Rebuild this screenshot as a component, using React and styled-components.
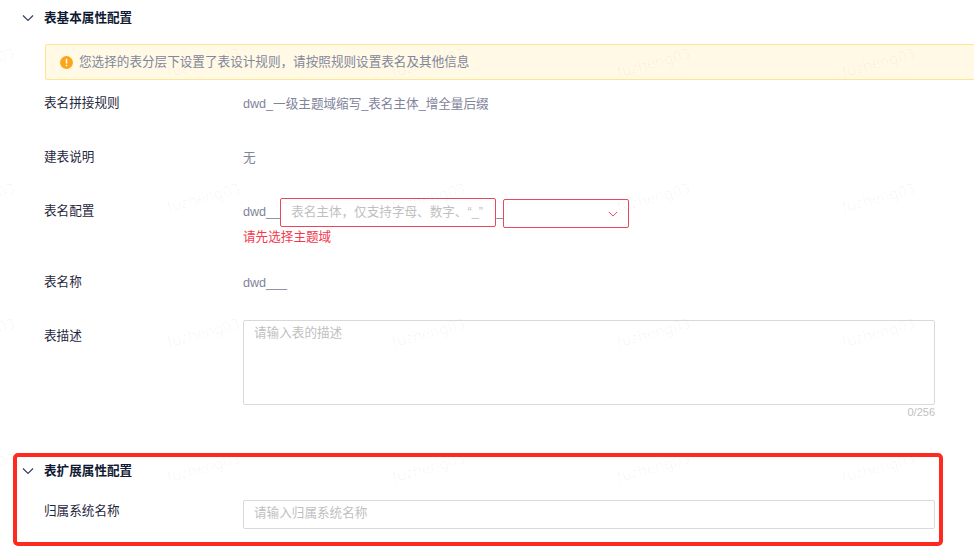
import styled, { createGlobalStyle } from "styled-components";

const GlobalStyle = createGlobalStyle`
    html, body {
        margin: 0;
        padding: 0;
        background: #fff;
    }
    body {
        font-family: "Liberation Sans", "Noto Sans CJK SC", sans-serif;
        font-size: 12.6px;
        color: #1f2740;
    }
`;

const Chevron = ({color = "#3a4060", size = 12}) => (
    <svg width={size} height={size} viewBox="0 0 12 12" fill="none">
        <path d="M1 3.5 L6 8.5 L11 3.5" stroke={color} strokeWidth="1.2" />
    </svg>
);

const WarningIcon = () => (
    <svg width="13" height="13" viewBox="0 0 13 13">
        <circle cx="6.5" cy="6.5" r="6.5" fill="#faa61a" />
        <rect x="5.8" y="2.8" width="1.4" height="4.8" fill="#fff" />
        <rect x="5.8" y="8.7" width="1.4" height="1.5" fill="#fff" />
    </svg>
);

const Row = ({label, gap, children}) => (
    <FormRow $gap={gap}>
        <Label>{label}</Label>
        <div>{children}</div>
    </FormRow>
);

const App = () => {
    const marks = Array.from({length: 20}, (_, index) => index);
    return (
        <Page>
            <GlobalStyle />
            <SectionHeader>
                <Chevron />
                <SectionTitle>表基本属性配置</SectionTitle>
            </SectionHeader>
            <Alert>
                <WarningIcon />
                您选择的表分层下设置了表设计规则，请按照规则设置表名及其他信息
            </Alert>
            <Row label="表名拼接规则">
                <Value>dwd_一级主题域缩写_表名主体_增全量后缀</Value>
            </Row>
            <Row label="建表说明">
                <Value>无</Value>
            </Row>
            <Row label="表名配置" gap={19}>
                <NameControls>
                    <Value>dwd__</Value>
                    <NameInput>表名主体，仅支持字母、数字、“_”</NameInput>
                    <Joiner>_</Joiner>
                    <NameSelect>
                        <Chevron color="#e8485c" size={10} />
                    </NameSelect>
                </NameControls>
                <ErrorText>请先选择主题域</ErrorText>
            </Row>
            <Row label="表名称">
                <Value>dwd___</Value>
            </Row>
            <Row label="表描述" gap={34}>
                <TextArea>请输入表的描述</TextArea>
                <Counter>0/256</Counter>
            </Row>
            <HighlightFrame>
                <SectionHeader $inFrame>
                    <Chevron />
                    <SectionTitle>表扩展属性配置</SectionTitle>
                </SectionHeader>
                <FrameRow>
                    <Label>归属系统名称</Label>
                    <TextInput>请输入归属系统名称</TextInput>
                </FrameRow>
            </HighlightFrame>
            <WatermarkLayer>
                {marks.map((mark) => (
                    <Watermark key={mark}>fuzheng03</Watermark>
                ))}
            </WatermarkLayer>
        </Page>
    );
};

const Page = styled.div`
    position: relative;
    width: 974px;
    height: 557px;
    padding-top: 8px;
    box-sizing: border-box;
    overflow: hidden;
`;

const SectionHeader = styled.div`
    display: flex;
    align-items: center;
    gap: 10px;
    height: 20px;
    padding-left: ${(props) => (props.$inFrame ? "5px" : "22px")};
`;

const SectionTitle = styled.span`
    font-weight: 700;
    line-height: 20px;
    color: #111a33;
`;

const Alert = styled.div`
    display: flex;
    align-items: center;
    gap: 6px;
    box-sizing: border-box;
    height: 36px;
    margin: 16px -8px 7px 45px;
    padding-left: 14px;
    background: #fff9e6;
    border: 1px solid #ffe58f;
    border-radius: 2px;
    color: #83879c;
    line-height: 20px;
`;

const FormRow = styled.div`
    display: grid;
    grid-template-columns: 199px 692px;
    min-height: 32px;
    margin-bottom: ${(props) => props.$gap ?? 22}px;
    padding-left: 44px;
`;

const Label = styled.div`
    padding-top: 6px;
    line-height: 20px;
    color: #1f2740;
`;

const Value = styled.div`
    padding-top: 7px;
    line-height: 20px;
    color: #7f849a;
`;

const NameControls = styled.div`
    display: flex;
    align-items: flex-start;
    height: 32px;
`;

const NameInput = styled.div`
    box-sizing: border-box;
    width: 216px;
    height: 29px;
    margin-top: 3px;
    padding-left: 10px;
    border: 1px solid #e8485c;
    border-radius: 2px;
    color: #bfbfbf;
    line-height: 27px;
    white-space: nowrap;
    overflow: hidden;
`;

const Joiner = styled.div`
    width: 7px;
    padding-top: 7px;
    line-height: 20px;
    color: #7f849a;
`;

const NameSelect = styled.div`
    display: flex;
    align-items: center;
    justify-content: flex-end;
    box-sizing: border-box;
    width: 126px;
    height: 29px;
    margin-top: 4px;
    padding-right: 10px;
    border: 1px solid #e8485c;
    border-radius: 2px;
`;

const ErrorText = styled.div`
    line-height: 20px;
    color: #f5384c;
`;

const TextArea = styled.div`
    box-sizing: border-box;
    height: 85px;
    padding: 2px 10px;
    border: 1px solid #d9d9d9;
    border-radius: 2px;
    color: #bfbfbf;
    line-height: 20px;
`;

const Counter = styled.div`
    text-align: right;
    font-size: 11px;
    line-height: 14px;
    color: #bfbfbf;
`;

const HighlightFrame = styled.div`
    position: relative;
    z-index: 2;
    box-sizing: border-box;
    width: 930px;
    height: 93px;
    margin-left: 13px;
    padding-top: 4px;
    border: 4px solid #ff2a1f;
    border-radius: 5px;
`;

const FrameRow = styled.div`
    display: grid;
    grid-template-columns: 199px 692px;
    margin-top: 14px;
    padding-left: 27px;
`;

const TextInput = styled.div`
    box-sizing: border-box;
    height: 29px;
    margin-top: 5px;
    padding-left: 10px;
    border: 1px solid #d9d9d9;
    border-radius: 2px;
    color: #bfbfbf;
    line-height: 25px;
`;

const WatermarkLayer = styled.div`
    position: absolute;
    top: 62px;
    left: -57px;
    display: grid;
    grid-template-columns: repeat(5, 225px);
    grid-auto-rows: 135px;
    pointer-events: none;
`;

const Watermark = styled.div`
    width: 90px;
    height: 20px;
    margin: -10px 0 0 -10px;
    font-family: "Noto Sans", sans-serif;
    font-size: 15px;
    line-height: 20px;
    text-align: center;
    color: rgba(0, 0, 0, 0.035);
    transform: rotate(-15deg);
`;

export default App
